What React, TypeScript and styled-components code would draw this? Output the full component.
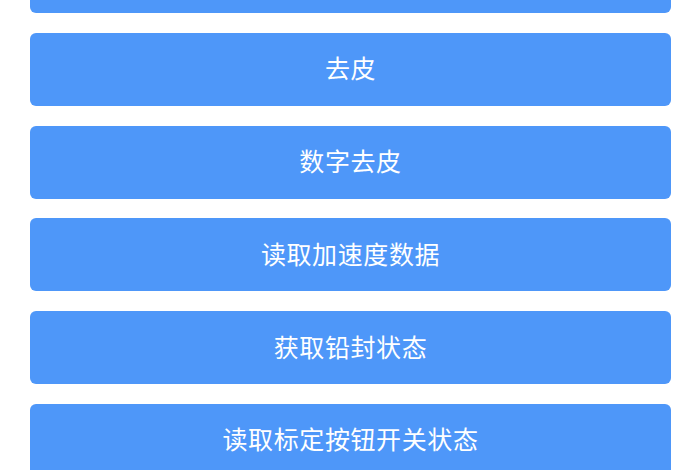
import React from 'react';
import styled, { createGlobalStyle } from 'styled-components';

const GlobalStyle = createGlobalStyle`
  html, body {
    margin: 0;
    padding: 0;
    background: #ffffff;
    overflow: hidden;
  }
  body {
    font-family: "Noto Sans CJK SC", "Noto Sans", sans-serif;
  }
`;

const Page = styled.div`
  width: 700px;
  height: 470px;
  overflow: hidden;
  background: #ffffff;
`;

// the list is scrolled: the first button only shows its lower edge
const ButtonList = styled.div`
  display: flex;
  flex-direction: column;
  gap: 19.75px;
  padding: 0 29px 0 30px;
  margin-top: -60px;
`;

const ActionButton = styled.button`
  display: flex;
  align-items: center;
  justify-content: center;
  height: 73px;
  width: 100%;
  border: none;
  border-radius: 6px;
  background: #4e97f9;
  color: #ffffff;
  font-family: "Noto Sans CJK SC", "Noto Sans", sans-serif;
  font-size: 25px;
  font-weight: 400;
  letter-spacing: 0.6px;
  cursor: pointer;
  padding: 0 0 4px;
`;

const actions = ['', '去皮', '数字去皮', '读取加速度数据', '获取铅封状态', '读取标定按钮开关状态'];

export default function App() {
  return (
    <>
      <GlobalStyle />
      <Page>
        <ButtonList>
          {actions.map((label, i) => (
            <ActionButton key={i}>{label}</ActionButton>
          ))}
        </ButtonList>
      </Page>
    </>
  );
}
